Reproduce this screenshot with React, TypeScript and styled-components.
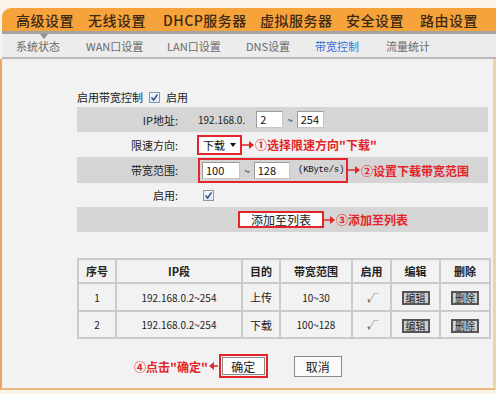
import React from 'react';
import styled, { createGlobalStyle } from 'styled-components';

const GlobalStyle = createGlobalStyle`
  html, body {
    margin: 0;
    padding: 0;
    background: #faf3e8;
  }
  body {
    font-family: "Noto Sans CJK SC", "Liberation Sans", sans-serif;
  }
  * {
    box-sizing: border-box;
  }
`;

const RED = '#e3242b';

const Page = styled.div`
  width: 496px;
  height: 394px;
  overflow: hidden;
  padding-top: 8px;
  display: flex;
  flex-direction: column;
`;

const TopNav = styled.div`
  height: 26px;
  margin-left: 2px;
  background: #f7a33b;
  border-radius: 9px 0 0 0;
  display: grid;
  grid-template-columns: 72px 75px 97px 86px 74px auto;
  align-items: center;
  padding-left: 14px;
  border-bottom: 3px solid #a3a3a3;
`;

const TopItem = styled.div<{ $active?: boolean }>`
  position: relative;
  font-size: 14px;
  color: #3f2812;
  font-weight: 500;
  letter-spacing: 0.5px;
  line-height: 22px;
  white-space: nowrap;

  ${(p) =>
    p.$active &&
    `
    &::after {
      content: '';
      position: absolute;
      left: 24px;
      bottom: -8px;
      border-left: 4px solid transparent;
      border-right: 4px solid transparent;
      border-top: 5px solid #8f8f8f;
    }
  `}
`;

const SubNav = styled.div`
  height: 25px;
  margin-left: 2px;
  background: #ececec;
  border-bottom: 2px solid #b9b9b9;
  display: grid;
  grid-template-columns: 70px 81px 79px 69px 71px auto;
  align-items: center;
  padding-left: 14px;
`;

const SubItem = styled.div<{ $active?: boolean }>`
  font-size: 11px;
  color: ${(p) => (p.$active ? '#3b6fd4' : '#6a6a6a')};
  white-space: nowrap;
`;

const Content = styled.div`
  flex: 1;
  background: #f2f2f2;
  border-left: 2px solid #f0a25c;
  border-right: 3px solid #f1d3a9;
  border-bottom: 2px solid #f2b57a;
  margin-bottom: 4px;
  padding: 30px 0 0 75px;
  display: flex;
  flex-direction: column;
`;

const EnableLine = styled.div`
  height: 16px;
  display: flex;
  align-items: center;
  gap: 6px;
  font-size: 11px;
  color: #222;
  margin-bottom: 2px;
`;

const Form = styled.div`
  width: 411px;
  display: flex;
  flex-direction: column;
`;

const FormRow = styled.div<{ $shade?: boolean; $h?: number }>`
  height: ${(p) => p.$h ?? 25}px;
  background: ${(p) => (p.$shade ? '#d5d5d5' : 'transparent')};
  display: grid;
  grid-template-columns: 103px 1fr;
  column-gap: 18px;
  align-items: center;
`;

const Label = styled.div`
  text-align: right;
  font-size: 11px;
  color: #222;
  padding-right: 2px;
`;

const Value = styled.div`
  display: flex;
  align-items: center;
  font-size: 10px;
  color: #222;
`;

const Field = styled.div<{ $w: number }>`
  width: ${(p) => p.$w}px;
  height: 17px;
  background: #fff;
  border: 1px solid #c7c7c7;
  border-top-color: #9a9a9a;
  border-left-color: #9a9a9a;
  font-size: 11px;
  line-height: 15px;
  padding-left: 3px;
  color: #111;
`;

const Tilde = styled.span`
  font-size: 10px;
  margin: 0 4px;
  color: #333;
`;

const RedBox = styled.div<{ $pad?: number }>`
  border: 2px solid ${RED};
  padding: ${(p) => p.$pad ?? 0}px;
  display: flex;
  align-items: center;
  background: #fff;
`;

const SelectBox = styled.div`
  width: 41px;
  height: 16px;
  display: flex;
  align-items: center;
  justify-content: space-between;
  padding: 0 4px;
  font-size: 11px;
  color: #111;
`;

const Caret = styled.span`
  border-left: 3px solid transparent;
  border-right: 3px solid transparent;
  border-top: 4px solid #111;
`;

const Callout = styled.div<{ $reverse?: boolean }>`
  display: flex;
  align-items: center;
  flex-direction: ${(p) => (p.$reverse ? 'row-reverse' : 'row')};
  color: ${RED};
  font-size: 12px;
  font-weight: 700;
  white-space: nowrap;
  gap: 1px;
`;

const Unit = styled.span`
  font-family: "Liberation Mono", monospace;
  font-size: 9px;
  margin-left: 8px;
  color: #111;
  letter-spacing: -0.3px;
`;

const Check = styled.span`
  width: 11px;
  height: 11px;
  border: 1px solid #8796ab;
  background: linear-gradient(#f4f7fb, #dfe6ef);
  display: inline-flex;
  align-items: center;
  justify-content: center;
`;

const ButtonCell = styled.div`
  grid-column: 1 / span 2;
  display: flex;
  align-items: center;
  padding-left: 161px;
`;

const PlainButton = styled.div<{ $w: number; $h?: number }>`
  width: ${(p) => p.$w}px;
  height: ${(p) => p.$h ?? 16}px;
  background: #fbfbfb;
  border: 1px solid #8a8a8a;
  font-size: 12px;
  color: #222;
  display: flex;
  align-items: center;
  justify-content: center;
`;

const Table = styled.table`
  width: 412px;
  margin-top: 26px;
  border-collapse: collapse;
  border: 2px solid #c3c3c3;
  table-layout: fixed;
`;

const Th = styled.th<{ $w: number }>`
  width: ${(p) => p.$w}px;
  height: 24px;
  font-size: 11px;
  font-weight: 700;
  color: #222;
  border: 2px solid #cbcbcb;
  padding: 0;
`;

const Td = styled.td<{ $h?: number }>`
  height: ${(p) => p.$h ?? 27}px;
  font-size: 10px;
  color: #222;
  text-align: center;
  border: 2px solid #cbcbcb;
  padding: 0;
`;

const SmallButton = styled.span`
  display: inline-block;
  width: 28px;
  height: 14px;
  background: #cfcfcf;
  border: 2px solid #555;
  font-size: 10px;
  line-height: 10px;
  color: #222;
  vertical-align: middle;
`;

const Actions = styled.div`
  display: flex;
  align-items: center;
  margin-top: 15px;
  padding-left: 57px;
`;

const Arrow = ({ dir = 'right', len = 10 }: { dir?: 'left' | 'right'; len?: number }) => (
  <svg width={len} height="8" viewBox={`0 0 ${len} 8`}>
    {dir === 'right' ? (
      <>
        <line x1="0" y1="4" x2={len - 4} y2="4" stroke={RED} strokeWidth="1.5" />
        <polygon points={`${len - 5},0 ${len},4 ${len - 5},8`} fill={RED} />
      </>
    ) : (
      <>
        <polygon points="5,0 0,4 5,8" fill={RED} />
        <line x1="4" y1="4" x2={len} y2="4" stroke={RED} strokeWidth="1.5" />
      </>
    )}
  </svg>
);

const Tick = () => (
  <svg width="9" height="9" viewBox="0 0 9 9">
    <path d="M1.5 4.5 L3.6 7 L7.5 1.5" fill="none" stroke="#2d4f8a" strokeWidth="1.4" />
  </svg>
);

const rows = [
  { no: 1, ip: '192.168.0.2~254', dir: '上传', bw: '10~30' },
  { no: 2, ip: '192.168.0.2~254', dir: '下载', bw: '100~128' },
];

export default function App() {
  return (
    <>
      <GlobalStyle />
      <Page>
        <TopNav>
          <TopItem $active>高级设置</TopItem>
          <TopItem>无线设置</TopItem>
          <TopItem>DHCP服务器</TopItem>
          <TopItem>虚拟服务器</TopItem>
          <TopItem>安全设置</TopItem>
          <TopItem>路由设置</TopItem>
        </TopNav>
        <SubNav>
          <SubItem>系统状态</SubItem>
          <SubItem>WAN口设置</SubItem>
          <SubItem>LAN口设置</SubItem>
          <SubItem>DNS设置</SubItem>
          <SubItem $active>带宽控制</SubItem>
          <SubItem>流量统计</SubItem>
        </SubNav>
        <Content>
          <EnableLine>
            启用带宽控制
            <Check>
              <Tick />
            </Check>
            启用
          </EnableLine>
          <Form>
            <FormRow $shade>
              <Label>IP地址:</Label>
              <Value>
                <span style={{ marginRight: 11 }}>192.168.0.</span>
                <Field $w={27}>2</Field>
                <Tilde>~</Tilde>
                <Field $w={27}>254</Field>
              </Value>
            </FormRow>
            <FormRow>
              <Label>限速方向:</Label>
              <Value style={{ marginLeft: -1 }}>
                <RedBox>
                  <SelectBox>
                    下载
                    <Caret />
                  </SelectBox>
                </RedBox>
                <Callout>
                  <Arrow len={12} />
                  ①选择限速方向"下载"
                </Callout>
              </Value>
            </FormRow>
            <FormRow $shade $h={26}>
              <Label>带宽范围:</Label>
              <Value>
                <RedBox $pad={2} style={{ width: 150, height: 25, background: 'transparent' }}>
                  <Field $w={40}>100</Field>
                  <Tilde>~</Tilde>
                  <Field $w={38}>128</Field>
                  <Unit>(KByte/s)</Unit>
                </RedBox>
                <Callout>
                  <Arrow len={12} />
                  ②设置下载带宽范围
                </Callout>
              </Value>
            </FormRow>
            <FormRow $h={24}>
              <Label>启用:</Label>
              <Value style={{ paddingLeft: 5 }}>
                <Check>
                  <Tick />
                </Check>
              </Value>
            </FormRow>
            <FormRow $shade>
              <ButtonCell>
                <RedBox>
                  <PlainButton $w={82} $h={13} style={{ border: 'none' }}>
                    添加至列表
                  </PlainButton>
                </RedBox>
                <Callout>
                  <Arrow len={11} />
                  ③添加至列表
                </Callout>
              </ButtonCell>
            </FormRow>
          </Form>
          <Table>
            <thead>
              <tr>
                <Th $w={38}>序号</Th>
                <Th $w={126}>IP段</Th>
                <Th $w={38}>目的</Th>
                <Th $w={72}>带宽范围</Th>
                <Th $w={39}>启用</Th>
                <Th $w={49}>编辑</Th>
                <Th $w={50}>删除</Th>
              </tr>
            </thead>
            <tbody>
              {rows.map((r) => (
                <tr key={r.no}>
                  <Td $h={r.no === 1 ? 28 : 27}>{r.no}</Td>
                  <Td>{r.ip}</Td>
                  <Td style={{ fontSize: 11 }}>{r.dir}</Td>
                  <Td>{r.bw}</Td>
                  <Td style={{ fontStyle: 'italic' }}>√</Td>
                  <Td>
                    <SmallButton>编辑</SmallButton>
                  </Td>
                  <Td>
                    <SmallButton>删除</SmallButton>
                  </Td>
                </tr>
              ))}
            </tbody>
          </Table>
          <Actions>
            <Callout $reverse>
              <Arrow dir="left" len={9} />
              ④点击"确定"
            </Callout>
            <RedBox style={{ marginLeft: 1, background: 'transparent' }} $pad={1}>
              <PlainButton $w={43} $h={18}>
                确定
              </PlainButton>
            </RedBox>
            <PlainButton $w={48} $h={21} style={{ marginLeft: 26 }}>
              取消
            </PlainButton>
          </Actions>
        </Content>
      </Page>
    </>
  );
}
